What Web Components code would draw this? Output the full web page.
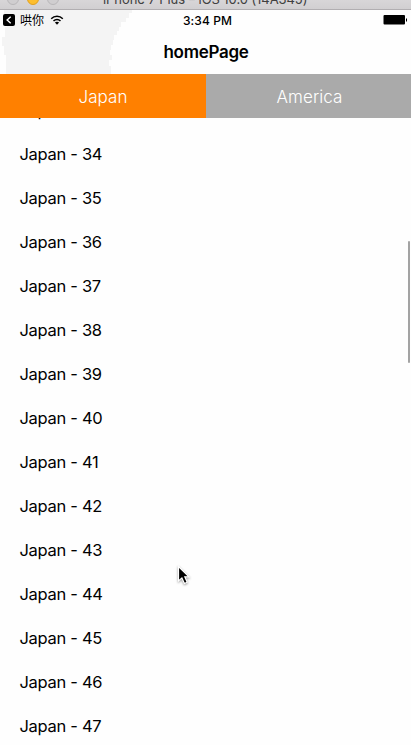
<!DOCTYPE html>
<html lang="en">
<head>
<meta charset="utf-8">
<title>homePage</title>
<style>
html,body{margin:0;height:100%;overflow:hidden;background:#fefefe}
body{font-family:Inter,"Noto Sans CJK SC",sans-serif;color:#000}
</style>
</head>
<body>
<phone-app></phone-app>
<script>
const define = (name, html, setup) => customElements.define(name, class extends HTMLElement {
  connectedCallback() {
    if (this.shadowRoot) return;
    const root = this.attachShadow({ mode: 'open' });
    root.innerHTML = html;
    if (setup) setup(root, this);
  }
});

define('window-bar', `<style>
:host{display:flex;height:10px;box-sizing:border-box;flex:none;background:linear-gradient(#d8d6d8,#d1cfd1);border-bottom:1px solid #b1aeb1;overflow:hidden;align-items:flex-end;position:relative}
.dots{display:flex;gap:8px;padding-left:7px;height:12px;margin-bottom:4px}
i{width:12px;height:12px;box-sizing:border-box;border-radius:50%;background:#d0ced0;border:1px solid #b9b7b9}
i.min{background:#fdbe2e;border-color:#dfa023}
.title{position:absolute;left:103px;top:-9px;line-height:16px;font-size:13px;letter-spacing:-.07px;color:#404040;white-space:nowrap}
</style><div class="dots"><i></i><i class="min"></i><i></i></div><span class="title"><slot></slot></span>`);

define('status-bar', `<style>
:host{display:grid;grid-template-columns:1fr auto 1fr;align-items:center;height:20px;flex:none;padding:0 4px 0 3px;position:relative}
.left{display:flex;align-items:center}
.back{margin-right:5px}
.left span{font-size:12px;line-height:18px;padding-top:2px;width:24px;margin-right:6px}
.time{font-size:12px;line-height:18px;padding:1px 0 0 5px;font-weight:500;letter-spacing:.1px}
.battery{justify-self:end}
svg{display:block}
</style>
<div class="left">
<svg class="back" width="12" height="12" viewBox="0 0 12 12"><rect width="12" height="12" rx="2"/><path d="M7.7 2.7 4.1 6l3.6 3.3" fill="none" stroke="#fff" stroke-width="1.4"/></svg>
<span>哄你</span>
<svg width="14" height="10" viewBox="0 0 14 10" fill="none" stroke="#000" stroke-width="1.5"><path d="M1.2 3.7C4.4.5 9.6.5 12.8 3.7M3.5 6c2-1.9 5-1.9 7 0"/><path d="M4.9 7.6C6 6.6 8 6.6 9.1 7.6L7 9.7Z" fill="#000" stroke="none"/></svg>
</div>
<span class="time">3:34 PM</span>
<svg class="battery" width="24" height="10" viewBox="0 0 24 10"><rect x=".5" width="21.5" height="9.5" rx="1"/><path d="M23 3.5h1v3h-1z"/></svg>`);

define('nav-bar', `<style>
:host{display:flex;height:44px;flex:none;align-items:center;justify-content:center;font-size:17px;font-weight:600;letter-spacing:-.3px;padding-left:1px}
span{position:relative}
</style><span><slot></slot></span>`);

define('phone-header', `<style>
:host{display:block;flex:none;position:relative;height:64px}
.haze{position:absolute;inset:0;width:140px;height:64px}
</style>
<svg class="haze" viewBox="0 0 140 64" fill="#f4f4f4"><path d="M4 0H132V3H129V8H126V12H121V17H119V21H117V25H114V30H113V35H111V40H110V45H112V50H109V56H111V64H6V45H4V36H2V27H5V17H7V8H4Z"/></svg>
<status-bar></status-bar><nav-bar><slot></slot></nav-bar>`);

define('tab-item', `<style>
:host{display:flex;align-items:center;justify-content:center;background:#aaa;color:#fff;font-size:17px;font-weight:300;letter-spacing:.1px;padding-top:1px}
:host(:not([selected])){padding-left:2px}
:host([selected]){background:#ff8000}
</style><slot></slot>`);

define('tab-bar', `<style>
:host{display:grid;grid-template-columns:206px 1fr;height:44px;flex:none}
</style><slot></slot>`);

define('list-row', `<style>
:host{display:flex;align-items:center;height:44px;padding-left:19.5px;font-size:16.5px;white-space:pre;letter-spacing:-.3px}
</style><span><slot></slot></span>`);

define('city-list', `<style>
:host{display:block;flex:1;min-height:0;overflow:hidden;position:relative}
.rows{margin-top:-30px}
.thumb{position:absolute;right:1px;top:123px;width:2px;height:122px;border-radius:1px;background:#a3a3a3}
</style><div class="rows"></div><div class="thumb"></div>`, root => {
  const rows = root.querySelector('.rows');
  for (let n = 33; n <= 47; n++) {
    const row = document.createElement('list-row');
    row.textContent = 'Japan - ' + n;
    rows.append(row);
  }
});

define('mouse-pointer', `<style>
:host{position:absolute;left:176px;top:565px;width:16px;height:22px}
svg{display:block;filter:drop-shadow(0 1px 1px #0006)}
</style><svg width="16" height="22" viewBox="0 0 16 22"><path d="M2.5 1.5V16L5.9 12.9 8.4 18.5 11.2 17.3 8.8 11.8H13Z" stroke="#fff" stroke-width="1.2"/></svg>`);

define('phone-app', `<style>
:host{display:flex;flex-direction:column;width:411px;height:745px;position:relative;overflow:hidden;background:#fefefe}
</style>
<window-bar>iPhone 7 Plus – iOS 10.0 (14A345)</window-bar>
<phone-header>homePage</phone-header>
<tab-bar><tab-item selected>Japan</tab-item><tab-item>America</tab-item></tab-bar>
<city-list></city-list>
<mouse-pointer></mouse-pointer>`);
</script>
</body>
</html>
